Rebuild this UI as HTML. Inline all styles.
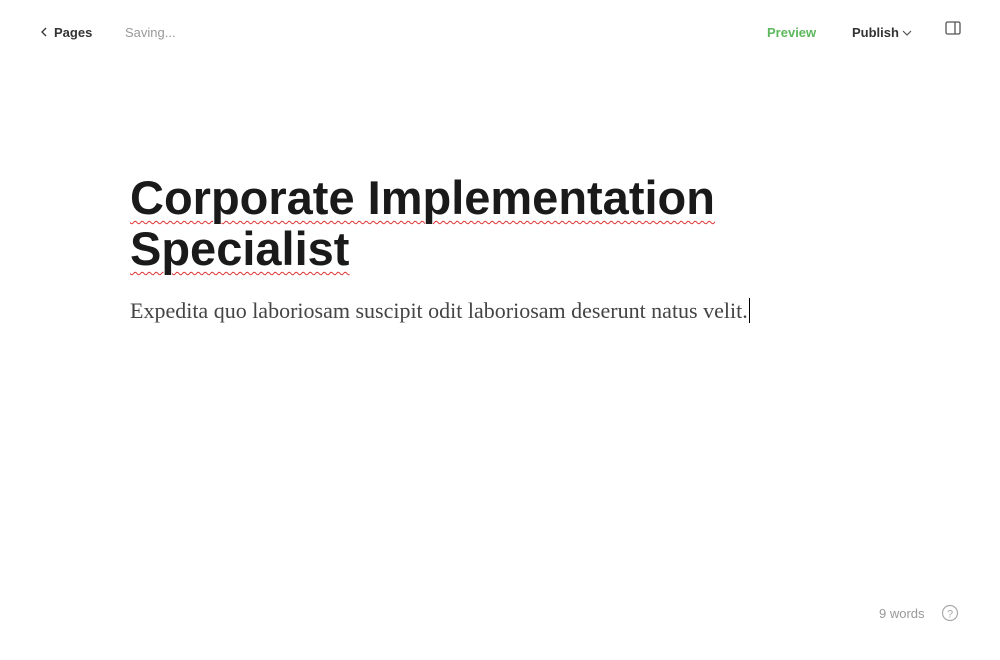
<!DOCTYPE html>
<html><head><meta charset="utf-8"><style>
body{margin:0;width:1000px;height:660px;background:#fff;position:relative;overflow:hidden;font-family:"Liberation Sans",sans-serif}
.a{position:absolute;white-space:nowrap}
.t{font-weight:bold;font-size:47px;color:#1a1a1a;line-height:51px;text-decoration:underline wavy #e03030;text-decoration-thickness:1px;text-underline-offset:6px}
</style></head><body>
<div class="a" style="left:40px;top:25px;font-size:13px;color:#333"><svg width="8" height="10" style="margin-right:6px"><path d="M6 1 L2 5 L6 9" fill="none" stroke="#333" stroke-width="1.3"/></svg><b style="font-weight:600">Pages</b></div>
<div class="a" style="left:125px;top:25px;font-size:13px;color:#999">Saving...</div>
<div class="a" style="left:767px;top:25px;font-size:13px;color:#5cb85c;font-weight:bold">Preview</div>
<div class="a" style="left:852px;top:25px;font-size:13px;color:#333;font-weight:bold">Publish<svg width="10" height="8" style="margin-left:3px"><path d="M1 2 L5 6 L9 2" fill="none" stroke="#555" stroke-width="1.2"/></svg></div>
<svg class="a" style="left:945px;top:21px" width="17" height="15"><rect x="1" y="1" width="14" height="12" rx="1.5" fill="none" stroke="#555" stroke-width="1.3"/><line x1="10" y1="1" x2="10" y2="13" stroke="#555" stroke-width="1.3"/></svg>
<div class="a t" style="left:130px;top:172px">Corporate Implementation</div>
<div class="a t" style="left:130px;top:223px">Specialist</div>
<div class="a" style="left:130px;top:298px;font-family:'Liberation Serif',serif;font-size:22px;color:#444">Expedita quo laboriosam suscipit odit laboriosam deserunt natus velit.<span style="border-left:1px solid #000;margin-left:1px"></span></div>
<div class="a" style="left:879px;top:606px;font-size:13px;color:#999">9 words</div>
<svg class="a" style="left:941px;top:604px" width="18" height="18"><circle cx="9" cy="9" r="7.5" fill="none" stroke="#aaa" stroke-width="1.2"/><text x="9" y="13.5" font-size="11" text-anchor="middle" fill="#aaa" font-family="Liberation Sans">?</text></svg>
</body></html>
